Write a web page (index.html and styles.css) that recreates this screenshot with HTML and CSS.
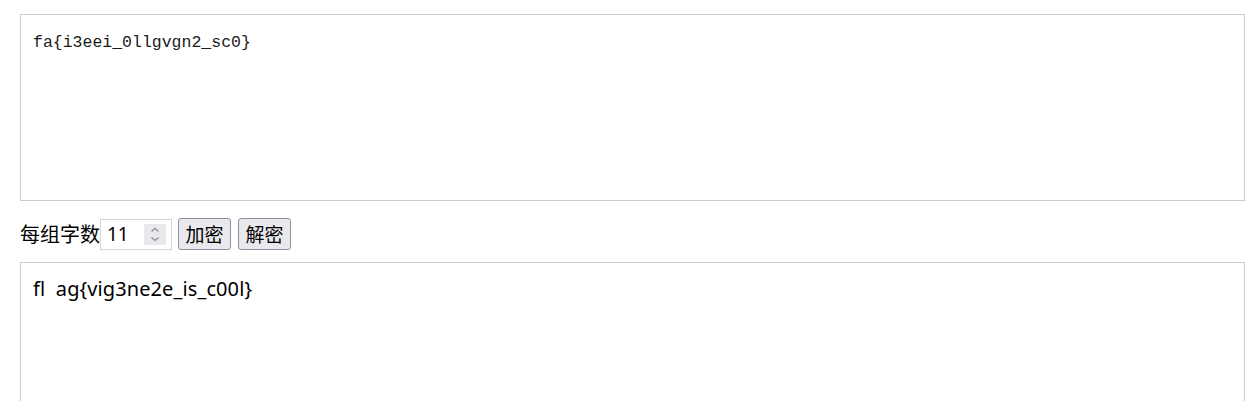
FILE: index.html
```html
<!DOCTYPE html>
<html lang="zh-CN">
<head>
<meta charset="utf-8">
<title>Vigenere</title>
<link rel="stylesheet" href="styles.css">
</head>
<body>
<div class="page">
  <div class="box box-in"><span class="mono">fa{i3eei_0llgvgn2_sc0}</span></div>
  <div class="controls">
    <span class="label">每组字数</span>
    <div class="num">
      <span class="num-val">11</span>
      <span class="spin">
        <svg width="22" height="21" viewBox="0 0 22 21">
          <path d="M7.5 7.5 L11 4.5 L14.5 7.5" fill="none" stroke="#8a8a8a" stroke-width="1.2"/>
          <path d="M7.5 13.5 L11 16.5 L14.5 13.5" fill="none" stroke="#8a8a8a" stroke-width="1.2"/>
        </svg>
      </span>
    </div>
    <button class="btn">加密</button>
    <button class="btn">解密</button>
  </div>
  <div class="box box-out"><span class="sans">fl&nbsp;&nbsp;ag{vig3ne2e_is_c00l}</span></div>
</div>
</body>
</html>
```
FILE: styles.css
```css
html, body {
  margin: 0;
  padding: 0;
  background: #fff;
}
.page {
  padding: 14px 10px 0 20px;
  font-family: "Noto Sans CJK SC", "Noto Sans", sans-serif;
  color: #000;
}
.box {
  box-sizing: border-box;
  border: 1px solid #cccccc;
  padding: 13px 12px;
  width: 1225px;
}
.box-in {
  height: 187px;
}
.box-out {
  height: 200px;
  padding-top: 13px;
}
.mono {
  font-family: "Liberation Mono", "DejaVu Sans Mono", monospace;
  font-size: 16.5px;
  line-height: 22px;
  color: #1a1a1a;
}
.sans {
  font-family: "Noto Sans", "Noto Sans CJK SC", sans-serif;
  font-size: 20px;
  line-height: 26px;
  letter-spacing: 0.1px;
}
.controls {
  display: flex;
  align-items: center;
  height: 32px;
  margin: 17px 0 12px;
}
.label {
  font-size: 20px;
  line-height: 32px;
}
.num {
  box-sizing: border-box;
  width: 72px;
  height: 31px;
  border: 1px solid #d6d6d6;
  display: flex;
  align-items: center;
  justify-content: space-between;
  padding: 0 5px 0 6px;
  margin-right: 6px;
}
.num-val {
  font-family: "Noto Sans", sans-serif;
  font-size: 19px;
  line-height: 29px;
}
.spin {
  display: block;
  width: 22px;
  height: 21px;
  background: #e9e9ed;
}
.spin svg {
  display: block;
}
.btn {
  box-sizing: border-box;
  height: 32px;
  width: 53px;
  padding: 0;
  margin: 0 7px 0 0;
  border: 1px solid #8f8f9d;
  border-radius: 3px;
  background: #e9e9ed;
  font-family: "Noto Sans CJK SC", sans-serif;
  font-size: 19px;
  line-height: 28px;
  color: #000;
}
```
